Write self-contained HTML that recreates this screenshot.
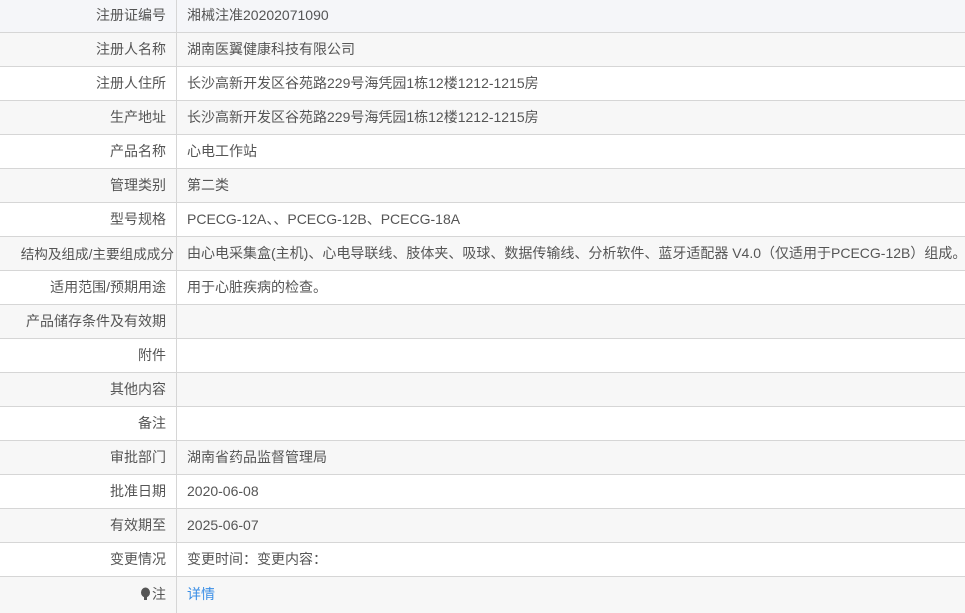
<!DOCTYPE html>
<html><head><meta charset="utf-8"><style>
body{margin:0;background:#fff;font-family:"Liberation Sans","Noto Sans CJK SC",sans-serif;font-size:14px;color:#555;width:965px;height:611px;overflow:hidden;position:relative}
.r{position:absolute;left:0;width:965px;height:34px;border-bottom:1px solid #d6d6d6;box-sizing:border-box}
.g{background:#f7f7f7}
.l{position:absolute;left:0;top:0;bottom:0;width:177px;border-right:1px solid #d6d6d6;text-align:right;padding-right:10px;padding-bottom:2px;box-sizing:border-box;display:flex;align-items:center;justify-content:flex-end;white-space:nowrap}
.v{position:absolute;left:187px;top:0;bottom:2px;display:flex;align-items:center;white-space:nowrap}
a{color:#3a8ee6;text-decoration:none}
</style></head><body>
<div class="r" style="top:0;height:33px;background:#f5f6f9"><div class="l">注册证编号</div><div class="v">湘械注准20202071090</div></div>
<div class="r g" style="top:33px"><div class="l">注册人名称</div><div class="v">湖南医翼健康科技有限公司</div></div>
<div class="r" style="top:67px"><div class="l">注册人住所</div><div class="v">长沙高新开发区谷苑路229号海凭园1栋12楼1212-1215房</div></div>
<div class="r g" style="top:101px"><div class="l">生产地址</div><div class="v">长沙高新开发区谷苑路229号海凭园1栋12楼1212-1215房</div></div>
<div class="r" style="top:135px"><div class="l">产品名称</div><div class="v">心电工作站</div></div>
<div class="r g" style="top:169px"><div class="l">管理类别</div><div class="v">第二类</div></div>
<div class="r" style="top:203px"><div class="l">型号规格</div><div class="v">PCECG-12A、、PCECG-12B、PCECG-18A</div></div>
<div class="r g" style="top:237px"><div class="l" style="padding-right:2px;font-size:13.6px">结构及组成/主要组成成分</div><div class="v">由心电采集盒(主机)、心电导联线、肢体夹、吸球、数据传输线、分析软件、蓝牙适配器 V4.0（仅适用于PCECG-12B）组成。</div></div>
<div class="r" style="top:271px"><div class="l">适用范围/预期用途</div><div class="v">用于心脏疾病的检查。</div></div>
<div class="r g" style="top:305px"><div class="l">产品储存条件及有效期</div></div>
<div class="r" style="top:339px"><div class="l">附件</div></div>
<div class="r g" style="top:373px"><div class="l">其他内容</div></div>
<div class="r" style="top:407px"><div class="l">备注</div></div>
<div class="r g" style="top:441px"><div class="l">审批部门</div><div class="v">湖南省药品监督管理局</div></div>
<div class="r" style="top:475px"><div class="l">批准日期</div><div class="v">2020-06-08</div></div>
<div class="r g" style="top:509px"><div class="l">有效期至</div><div class="v">2025-06-07</div></div>
<div class="r" style="top:543px"><div class="l">变更情况</div><div class="v">变更时间：变更内容：</div></div>
<div class="r g" style="top:577px;height:36px;border-bottom:none"><div class="l"><svg width="11" height="14" viewBox="0 0 11 14" style="margin-right:1px"><ellipse cx="5.5" cy="5.5" rx="4.5" ry="5" fill="#555"/><rect x="4" y="9.5" width="3" height="3.5" fill="#555"/></svg>注</div><div class="v"><a>详情</a></div></div>
</body></html>
